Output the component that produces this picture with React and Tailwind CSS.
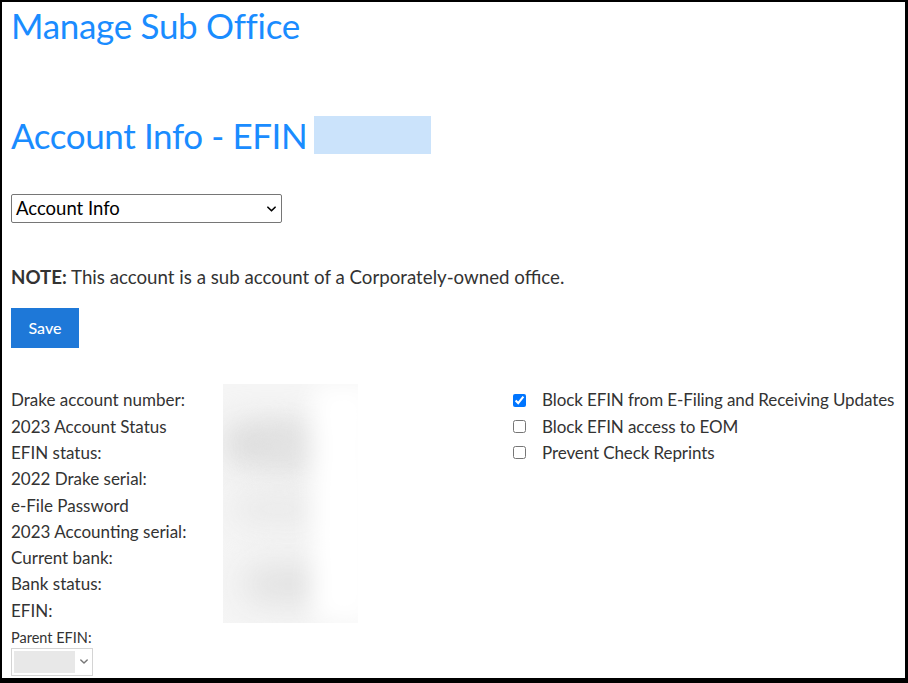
import React from 'react';

const labels = [
  'Drake account number:',
  '2023 Account Status',
  'EFIN status:',
  '2022 Drake serial:',
  'e-File Password',
  '2023 Accounting serial:',
  'Current bank:',
  'Bank status:',
  'EFIN:',
];

const options = [
  { label: 'Block EFIN from E-Filing and Receiving Updates', checked: true },
  { label: 'Block EFIN access to EOM', checked: false },
  { label: 'Prevent Check Reprints', checked: false },
];

function Chevron({ className }) {
  return (
    <svg viewBox="0 0 10 6" className={className} fill="none" stroke="currentColor" strokeWidth="1.8" strokeLinecap="round" strokeLinejoin="round">
      <path d="M1 1l4 4 4-4" />
    </svg>
  );
}

export default function App() {
  return (
    <div
      className="box-border w-[908px] h-[683px] overflow-hidden border-t-2 border-l-2 border-r-[3px] border-b-[5px] border-black bg-white text-[#333]"
      style={{ fontFamily: 'Lato, "Liberation Sans", sans-serif' }}
    >
      <div className="pl-[9px]">
        <h1 className="text-[35px] leading-[46px] text-[#1a8cff] tracking-[-0.3px]">Manage Sub Office</h1>

        <div className="mt-[67px] flex items-center h-[40px]">
          <h2 className="text-[35px] leading-[40px] text-[#1a8cff] tracking-[-0.4px]">Account Info - EFIN</h2>
          <div className="ml-[7px] h-[38px] w-[117px] bg-[#cbe3fb]" />
        </div>

        <div className="mt-[39px] flex items-center justify-between w-[271px] h-[29px] border border-[#767676] rounded-[2px] px-[4px] text-black">
          <span className="text-[18.5px] leading-none">Account Info</span>
          <Chevron className="w-[9px] h-[6px] mr-[1px]" />
        </div>

        <p className="mt-[42px] text-[18.7px] leading-[24px]">
          <span className="font-bold">NOTE:</span> This account is a sub account of a Corporately-owned office.
        </p>

        <button className="mt-[19px] w-[68px] h-[40px] bg-[#1e78d8] text-white text-[16px] font-medium">
          Save
        </button>

        <div className="mt-[39px] flex">
          <div className="w-[502px] flex">
            <div className="w-[212px] flex flex-col">
              {labels.map((l) => (
                <div key={l} className="h-[26.3px] flex items-center text-[17px] whitespace-nowrap">
                  {l}
                </div>
              ))}
              <div className="mt-[5px] text-[14.5px] leading-[18px]">Parent EFIN:</div>
              <div className="mt-[1px] w-[82px] h-[28px] border border-[#d4d4d4] flex items-center pl-[2px] pr-[4px] justify-between">
                <div className="w-[61px] h-[22px] bg-[#e8e8e8]" />
                <Chevron className="w-[8px] h-[5px] text-[#777]" />
              </div>
            </div>
            <div className="relative -mt-[3px] w-[135px] h-[239px] overflow-hidden bg-[#f5f5f5]">
              <div className="absolute left-[0px] top-[40px] w-[90px] h-[40px] rounded-full bg-[#dadada] blur-lg" />
              <div className="absolute left-[40px] top-[50px] w-[90px] h-[30px] rounded-full bg-[#e4e4e4] blur-lg" />
              <div className="absolute left-[10px] top-[110px] w-[90px] h-[30px] rounded-full bg-[#e8e8e8] blur-lg" />
              <div className="absolute left-[20px] top-[180px] w-[90px] h-[40px] rounded-full bg-[#e2e2e2] blur-lg" />
              <div className="absolute left-[90px] top-[0px] w-[60px] h-[239px] bg-white blur-md" />
            </div>
          </div>
          <div className="flex flex-col">
            {options.map((o) => (
              <label key={o.label} className="h-[26.3px] flex items-center text-[17px] whitespace-nowrap tracking-[-0.1px]">
                <input type="checkbox" defaultChecked={o.checked} className="w-[13px] h-[13px] m-0 accent-[#0075ff]" />
                <span className="ml-[16px]">{o.label}</span>
              </label>
            ))}
          </div>
        </div>
      </div>
    </div>
  );
}
